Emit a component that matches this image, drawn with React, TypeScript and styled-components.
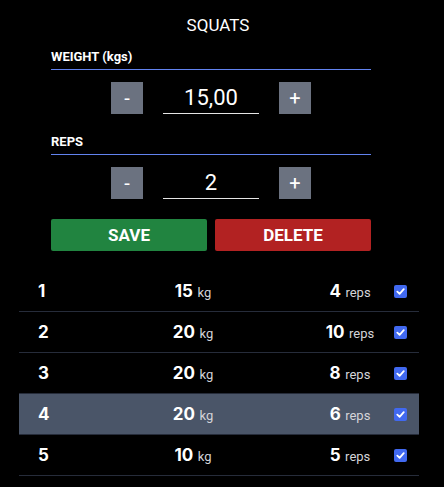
import React from 'react';
import styled, {createGlobalStyle} from 'styled-components';

const GlobalStyle = createGlobalStyle`
  body {
    margin: 0;
    background: #000;
    color: #fff;
    font-family: Roboto, "Liberation Sans", sans-serif;
  }
`;

interface ISet {
  weight: number;
  reps: number;
  done: boolean;
}

const sets: ISet[] = [
  {weight: 15, reps: 4, done: true},
  {weight: 20, reps: 10, done: true},
  {weight: 20, reps: 8, done: true},
  {weight: 20, reps: 6, done: true},
  {weight: 10, reps: 5, done: true},
];

const Stepper: React.FC<{value: string}> = ({value}) => (
  <StepRow>
    <StepButton>-</StepButton>
    <StepInput value={value} readOnly/>
    <StepButton>+</StepButton>
  </StepRow>
);

const App: React.FC = () => {
  const selected = 3;

  return (
    <Page>
      <GlobalStyle/>
      <Title>SQUATS</Title>
      <Form>
        <Label>WEIGHT (kgs)</Label>
        <Stepper value="15,00"/>
        <Label>REPS</Label>
        <Stepper value="2"/>
        <Actions>
          <ActionButton color="#218440">SAVE</ActionButton>
          <ActionButton color="#b22222">DELETE</ActionButton>
        </Actions>
      </Form>
      <SetList>
        {sets.map((set, i) => (
          <SetRow key={i} active={i === selected}>
            <SetIndex>{i + 1}</SetIndex>
            <SetWeight><b>{set.weight}</b> <small>kg</small></SetWeight>
            <SetReps><b>{set.reps}</b> <small>reps</small></SetReps>
            <Check>
              {set.done && (
                <svg width="9" height="9" viewBox="0 0 10 10">
                  <path d="M1.5 5.2 L4 7.6 L8.6 2.4" fill="none" stroke="#fff" strokeWidth="2" strokeLinecap="round" strokeLinejoin="round"/>
                </svg>
              )}
            </Check>
          </SetRow>
        ))}
      </SetList>
    </Page>
  );
};
export default App;


const Page = styled.div`
  width: 444px;
  padding-top: 15px;
`;

const Title = styled.div`
  font-size: 17px;
  line-height: 20px;
  text-align: center;
  margin-left: -8px;
`;

const Form = styled.div`
  width: 320px;
  margin: 14px 0 0 51px;
  display: flex;
  flex-direction: column;
`;

const Label = styled.div`
  font-size: 13px;
  line-height: 16px;
  font-weight: 700;
  padding-bottom: 4px;
  border-bottom: 1px solid #6283ef;
  div + & {
    margin-top: 20px;
  }
`;

const StepRow = styled.div`
  display: flex;
  justify-content: center;
  align-items: center;
  gap: 20px;
  margin-top: 12px;
`;

const StepButton = styled.button`
  width: 32px;
  height: 32px;
  padding: 0;
  border: none;
  border-radius: 0;
  background: #6b7280;
  color: #fff;
  font-family: Roboto, sans-serif;
  font-size: 20px;
  line-height: 32px;
`;

const StepInput = styled.input`
  width: 96px;
  height: 31px;
  box-sizing: border-box;
  padding: 0;
  border: none;
  border-bottom: 1px solid #e5e5e5;
  background: transparent;
  color: #fff;
  text-align: center;
  font-family: Roboto, sans-serif;
  font-size: 22px;
  outline: none;
`;

const Actions = styled.div`
  display: grid;
  grid-template-columns: 1fr 1fr;
  gap: 8px;
  margin-top: 20px;
`;

const ActionButton = styled.button<{color: string}>`
  height: 32px;
  border: none;
  border-radius: 2px;
  background: ${({color}) => color};
  color: #fff;
  font-family: Roboto, sans-serif;
  font-size: 17px;
  font-weight: 700;
`;

const SetList = styled.div`
  width: 400px;
  margin: 20px 0 0 19px;
  font-family: Inter, Roboto, sans-serif;
`;

const SetRow = styled.div<{active?: boolean}>`
  display: grid;
  grid-template-columns: 100px 148px 44px 78px 30px;
  align-items: center;
  height: 40px;
  border-bottom: 1px solid #262c3a;
  background: ${({active}) => active ? '#4a5568' : 'transparent'};

  b {
    font-size: 17px;
    font-weight: 700;
    color: #fff;
  }
  small {
    font-family: Roboto, sans-serif;
    font-size: 13px;
    color: #d4d4d8;
  }
`;

const SetIndex = styled.div`
  padding-left: 19px;
  font-size: 17px;
  font-weight: 700;
`;

const SetWeight = styled.div`
  text-align: center;
`;

const SetReps = styled.div`
  grid-column: 4;
  text-align: center;
  white-space: nowrap;
`;

const Check = styled.span`
  width: 13px;
  height: 13px;
  margin-left: 5px;
  border-radius: 2px;
  background: #4169f0;
  display: flex;
  align-items: center;
  justify-content: center;
`;
